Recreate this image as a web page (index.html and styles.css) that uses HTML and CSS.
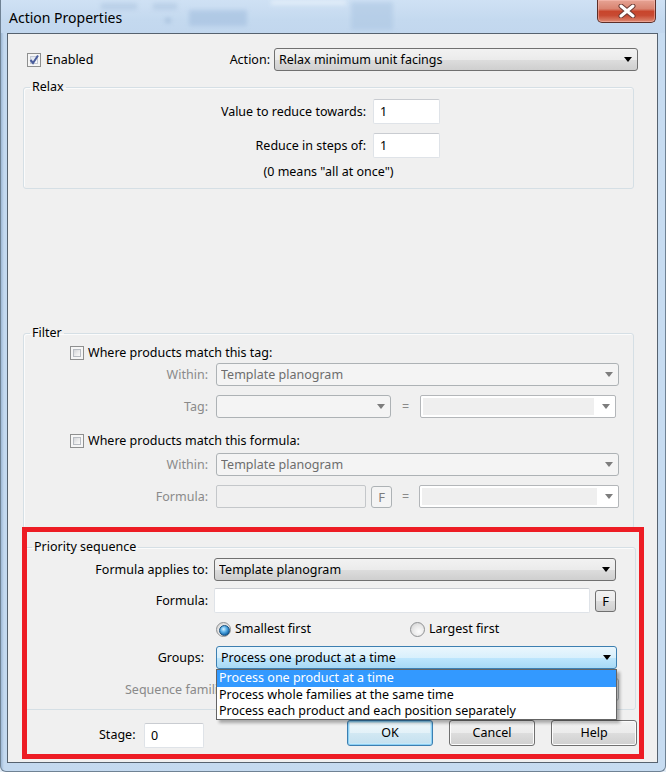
FILE: index.html
```html
<!DOCTYPE html>
<html>
<head>
<meta charset="utf-8">
<title>Action Properties</title>
<link rel="stylesheet" href="styles.css">
</head>
<body>
<div class="window">
  <div class="titlebar">
    <div class="glass" aria-hidden="true">
      <span class="blur b1"></span>
      <span class="blur b2"></span>
      <span class="blur b2a"></span>
      <span class="blur b3"></span>
      <span class="blur b4"></span>
      <span class="blur b5"></span>
    </div>
    <span class="title">Action Properties</span>
    <div class="close">
      <svg width="18" height="14" viewBox="0 0 18 14">
        <path d="M3 2 L15 12 M15 2 L3 12" stroke="#6b3a33" stroke-width="5" stroke-linecap="round"/>
        <path d="M3 2 L15 12 M15 2 L3 12" stroke="#ffffff" stroke-width="3" stroke-linecap="round"/>
      </svg>
    </div>
  </div>

  <div class="client">
    <div class="top-row">
      <label class="check">
        <span class="cb on">
          <svg width="12" height="12" viewBox="0 0 12 12"><path d="M2.5 6 L5 9 L10 1.5" fill="none" stroke="#4a5d9c" stroke-width="2"/></svg>
        </span>Enabled</label>
      <span class="action-label">Action:</span>
      <div class="combo btn action-combo"><span class="val">Relax minimum unit facings</span><span class="arrow"></span></div>
    </div>

    <fieldset class="group relax">
      <legend>Relax</legend>
      <div class="relax-row"><span class="lbl">Value to reduce towards:</span><div class="edit num">1</div></div>
      <div class="relax-row r2"><span class="lbl">Reduce in steps of:</span><div class="edit num">1</div></div>
      <div class="note">(0 means "all at once")</div>
    </fieldset>

    <fieldset class="group filter">
      <legend>Filter</legend>
      <div class="crow c1"><span class="cb"></span><span>Where products match this tag:</span></div>
      <div class="frow f-within1"><span class="lbl dis">Within:</span><div class="combo dcombo w403"><span class="val">Template planogram</span><span class="arrow grey"></span></div></div>
      <div class="frow f-tag"><span class="lbl dis">Tag:</span><div class="combo dcombo w175"><span class="val"></span><span class="arrow grey"></span></div><span class="eq e29">=</span><div class="ecombo w196"><span class="field"></span><span class="arrow grey"></span></div></div>
      <div class="crow c2"><span class="cb"></span><span>Where products match this formula:</span></div>
      <div class="frow f-within2"><span class="lbl dis">Within:</span><div class="combo dcombo w403"><span class="val">Template planogram</span><span class="arrow grey"></span></div></div>
      <div class="frow f-formula"><span class="lbl dis">Formula:</span><div class="dedit w150"></div><div class="fbtn dis">F</div><span class="eq e27">=</span><div class="ecombo w200"><span class="field"></span><span class="arrow grey"></span></div></div>
    </fieldset>

    <fieldset class="group priority">
      <legend>Priority sequence</legend>
      <div class="prow p-applies"><span class="lbl w184">Formula applies to:</span><div class="combo btn w402"><span class="val">Template planogram</span><span class="arrow"></span></div></div>
      <div class="prow p-formula"><span class="lbl w184">Formula:</span><div class="edit w376"></div><div class="fbtn">F</div></div>
      <div class="radios">
        <label class="radio r-first"><span class="rb on"></span>Smallest first</label>
        <label class="radio"><span class="rb"></span>Largest first</label>
      </div>
      <div class="prow p-groups">
        <span class="lbl w180">Groups:</span>
        <div class="dd-wrap">
          <div class="combo hot w401"><span class="val">Process one product at a time</span><span class="arrow"></span></div>
          <ul class="dropdown">
            <li class="sel">Process one product at a time</li>
            <li>Process whole families at the same time</li>
            <li>Process each product and each position separately</li>
          </ul>
        </div>
      </div>
      <div class="prow p-seq"><span class="seq-lbl dis">Sequence famili</span><div class="combo dcombo w403"><span class="val"></span><span class="arrow grey"></span></div></div>
    </fieldset>

    <div class="bottom-bar">
      <span class="stage-lbl">Stage:</span>
      <div class="edit stage">0</div>
      <div class="buttons">
        <div class="pbtn default">OK</div>
        <div class="pbtn">Cancel</div>
        <div class="pbtn">Help</div>
      </div>
    </div>
  </div>

  <div class="redbox" aria-hidden="true"></div>
</div>
</body>
</html>
```

FILE: styles.css
```css
* { box-sizing: border-box; }
html, body { margin: 0; padding: 0; }
body {
  width: 666px;
  height: 772px;
  overflow: hidden;
  background: #e4edf7;
  font-family: "Noto Sans", "Open Sans", "DejaVu Sans", sans-serif;
  font-size: 12.5px;
  line-height: 16px;
  color: #000;
}

.window {
  position: relative;
  width: 666px;
  height: 772px;
  display: flex;
  flex-direction: column;
  background: linear-gradient(to right, #9fb9d6 0, #c4d9ef 3px, #c7dcf1 100%);
  border: 1px solid #6f8294;
  border-top: none;
  border-radius: 0 0 6px 6px;
}

/* ---------- title bar ---------- */
.titlebar {
  position: relative;
  height: 33px;
  flex: none;
  display: flex;
  align-items: flex-start;
  background: linear-gradient(to bottom, #cfe1f4 0%, #c4d9ef 60%, #c2d7ee 100%);
  overflow: hidden;
}
.glass { position: absolute; inset: 0; }
.blur {
  position: absolute;
  filter: blur(2px);
}
.b1 { left: 100px; top: 3px; width: 36px; height: 7px; background: #a9c2de; opacity: .5; }
.b2 { left: 152px; top: 3px; width: 24px; height: 7px; background: #a9c2de; opacity: .5; }
.b2a { left: 164px; top: 18px; width: 6px; height: 5px; background: #93afcf; opacity: .5; }
.b3 { left: 188px; top: 10px; width: 58px; height: 16px; background: #a3bfdf; opacity: .6; }
.b4 { left: 350px; top: 2px; width: 42px; height: 28px; background: #adc7e3; opacity: .6; }
.b5 { left: 270px; top: 0; width: 75px; height: 5px; background: #eef5fc; opacity: .6; }

.title {
  position: relative;
  margin: 9px 0 0 8px;
  font-size: 14px;
  line-height: 18px;
  color: #000;
}
.close {
  position: relative;
  margin: 0 9px 0 auto;
  width: 59px;
  height: 23px;
  border: 1px solid #5c2e28;
  border-top: none;
  border-radius: 0 0 5px 5px;
  background: linear-gradient(to bottom, #e6a394 0%, #d98471 40%, #c8452c 52%, #c84a32 70%, #dd8a73 100%);
  box-shadow: inset 0 0 0 1px rgba(255, 200, 190, .45);
  display: flex;
  align-items: center;
  justify-content: center;
}

/* ---------- client ---------- */
.client {
  flex: 1;
  margin: 0 7px 8px 6px;
  border: 1px solid #56626f;
  background: #f0f0f0;
  padding-top: 14px;
  display: flex;
  flex-direction: column;
}

.top-row {
  display: flex;
  align-items: center;
  height: 23px;
  padding-left: 19px;
}
.check {
  display: flex;
  align-items: center;
  gap: 5px;
}
.action-label { margin-left: auto; margin-right: 4px; }
.action-combo { width: 364px; margin-right: 19px; padding-left: 5px; }

/* checkbox */
.cb {
  position: relative;
  width: 14px;
  height: 14px;
  flex: none;
  border: 1px solid #8e8f8f;
  background: #f6f6f6;
  display: inline-flex;
  align-items: center;
  justify-content: center;
}
.cb::before {
  content: "";
  position: absolute;
  inset: 2px;
  border: 1px solid #b8bcc2;
  background: linear-gradient(135deg, #d3d5d8 0%, #eeeeee 60%, #fafafa 100%);
}
.cb.on::before { border-color: #c3c9d4; background: linear-gradient(135deg, #dde3ee, #fafbfd); }
.cb svg { position: relative; }

/* radio */
.rb {
  position: relative;
  width: 15px;
  height: 15px;
  flex: none;
  border-radius: 50%;
  border: 1px solid #8f9193;
  background: radial-gradient(circle at 60% 65%, #fdfdfd 0%, #e6e6e6 55%, #c9c9c9 100%);
}
.rb.on::after {
  content: "";
  position: absolute;
  left: 2px; top: 2px;
  width: 9px; height: 9px;
  border-radius: 50%;
  border: 1px solid #1b4f7b;
  background: radial-gradient(circle at 40% 35%, #d6f1ff 0%, #5fb3ea 35%, #1a6fb2 70%, #0c4a80 100%);
}

/* combos */
.combo {
  height: 23px;
  display: flex;
  align-items: center;
  border-radius: 3px;
  padding-left: 4px;
  flex: none;
}
.combo .val { flex: 1; white-space: nowrap; overflow: hidden; }
.arrow {
  width: 0; height: 0;
  margin-right: 5px;
  border-left: 4px solid transparent;
  border-right: 4px solid transparent;
  border-top: 5px solid #000;
}
.arrow.grey { border-top-color: #7d7d7d; }
.btn {
  border: 1px solid #707070;
  background: linear-gradient(to bottom, #f2f2f2 0%, #ebebeb 50%, #dddddd 51%, #cfcfcf 100%);
}
.hot {
  border: 1px solid #3c7fb1;
  background: linear-gradient(to bottom, #eaf6fd 0%, #d9f0fc 50%, #bee6fd 51%, #a7d9f5 100%);
}
.dcombo {
  border: 1px solid #adb2b5;
  background: #f4f4f4;
  color: #6d6d6d;
}
.ecombo {
  height: 23px;
  flex: none;
  display: flex;
  align-items: center;
  border: 1px solid #b3b6b9;
  border-radius: 2px;
  background: #fff;
  padding: 2px 0 2px 2px;
}
.ecombo .field { align-self: stretch; flex: 1; background: #efefef; margin-right: 8px; }
.ecombo .arrow { margin-right: 5px; }

.edit {
  height: 25px;
  flex: none;
  border: 1px solid #dfe3e8;
  border-top-color: #c9ccd1;
  border-radius: 2px;
  background: #fff;
  padding: 3px 6px;
  line-height: 17px;
}
.dedit {
  height: 23px;
  flex: none;
  border: 1px solid #c4c7ca;
  border-radius: 2px;
  background: #f0f0f0;
}
.fbtn {
  width: 21px;
  height: 22px;
  flex: none;
  margin-left: 5px;
  border: 1px solid #707070;
  border-radius: 3px;
  background: linear-gradient(to bottom, #f2f2f2 0%, #ebebeb 50%, #dddddd 51%, #cfcfcf 100%);
  display: flex;
  align-items: center;
  justify-content: center;
  font-size: 13px;
}
.fbtn.dis { border-color: #adb2b5; background: #f4f4f4; color: #7d7d7d; }

.dis { color: #8a8a8a; }
.lbl { flex: none; text-align: right; white-space: nowrap; }

.w150 { width: 150px; }
.w175 { width: 175px; }
.w196 { width: 196px; }
.w200 { width: 200px; }
.w376 { width: 376px; }
.w401 { width: 401px; }
.w402 { width: 402px; }
.w403 { width: 403px; }

/* ---------- group boxes ---------- */
.group {
  margin: 0;
  padding: 0;
  min-inline-size: 0;
  border: 1px solid #d5dfe5;
  border-radius: 3px;
  box-shadow: inset 1px 1px 0 #fbfbfb;
}
.group legend {
  padding: 0 2px;
  margin-left: 6px;
  line-height: 16px;
}

.relax {
  margin: 8px 23px 0 15px;
  padding: 4px 0 8px 0;
}
.relax-row {
  display: flex;
  align-items: center;
  height: 25px;
}
.relax-row.r2 { margin-top: 9px; }
.relax-row .lbl { width: 342px; margin-right: 7px; }
.edit.num { width: 67px; }
.note { margin-top: 6px; text-align: center; }

.filter {
  margin: 136px 23px 0 15px;
  padding: 0 0 20px 0;
}
.crow {
  display: flex;
  align-items: center;
  gap: 4px;
  height: 16px;
  padding-left: 46px;
}
.crow.c1 { margin-top: 4px; }
.crow.c2 { margin-top: 15px; }
.frow {
  display: flex;
  align-items: center;
  height: 23px;
}
.frow .lbl { width: 184px; margin-right: 8px; }
.f-within1 { margin-top: 2px; }
.f-tag { margin-top: 9px; }
.f-within2 { margin-top: 4px; }
.f-formula { margin-top: 9px; }
.eq { flex: none; text-align: center; color: #8a8a8a; }
.e29 { width: 29px; }
.e27 { width: 27px; }

.priority {
  margin: 10px 21px 0 15px;
  padding: 0 0 8px 0;
}
.priority legend { margin-left: 8px; }
.prow {
  display: flex;
  align-items: center;
  height: 23px;
}
.w184 { width: 184px; margin-right: 6px; }
.w180 { width: 180px; margin-right: 12px; }
.p-applies { margin-top: 3px; }
.p-formula { margin-top: 8px; }
.radios {
  display: flex;
  align-items: center;
  height: 16px;
  margin-top: 9px;
  padding-left: 192px;
}
.radio { display: flex; align-items: center; gap: 4px; }
.r-first { width: 194px; }
.p-groups { margin-top: 9px; position: relative; z-index: 2; }
.dd-wrap { position: relative; }
.dropdown {
  position: absolute;
  left: 0;
  top: 23px;
  width: 401px;
  margin: 0;
  padding: 0;
  list-style: none;
  background: #fff;
  border: 1px solid #646464;
  box-shadow: 3px 3px 3px rgba(0, 0, 0, .3);
}
.dropdown li {
  height: 16px;
  line-height: 16px;
  padding-left: 2px;
  white-space: nowrap;
}
.dropdown li.sel { background: #3399ff; color: #fff; height: 17px; }
.p-seq { margin-top: 9px; }
.seq-lbl {
  width: 192px;
  flex: none;
  padding-left: 101px;
  white-space: nowrap;
}

/* ---------- bottom bar ---------- */
.bottom-bar {
  display: flex;
  align-items: flex-start;
  padding: 10px 20px 0 91px;
}
.stage-lbl { margin-top: 7px; width: 45px; }
.edit.stage { width: 60px; margin-top: 3px; }
.buttons {
  margin-left: auto;
  display: flex;
  gap: 16px;
}
.pbtn {
  width: 86px;
  height: 26px;
  border: 1px solid #707070;
  border-radius: 3px;
  background: linear-gradient(to bottom, #f2f2f2 0%, #ebebeb 50%, #dddddd 51%, #cfcfcf 100%);
  box-shadow: inset 0 0 0 1px #fcfcfc;
  display: flex;
  align-items: center;
  justify-content: center;
}
.pbtn.default {
  border-color: #3c7fb1;
  box-shadow: inset 0 0 0 1px #8ed0f4, inset 0 0 0 2px #c5e8f8;
  background: linear-gradient(to bottom, #eef7fb 0%, #e3f1f8 50%, #d2e8f3 51%, #c3e0ef 100%);
}

/* ---------- annotation ---------- */
.redbox {
  position: absolute;
  left: 21px;
  top: 527px;
  width: 622px;
  height: 232px;
  border: 5px solid #ed1c24;
  z-index: 10;
  pointer-events: none;
}
```
